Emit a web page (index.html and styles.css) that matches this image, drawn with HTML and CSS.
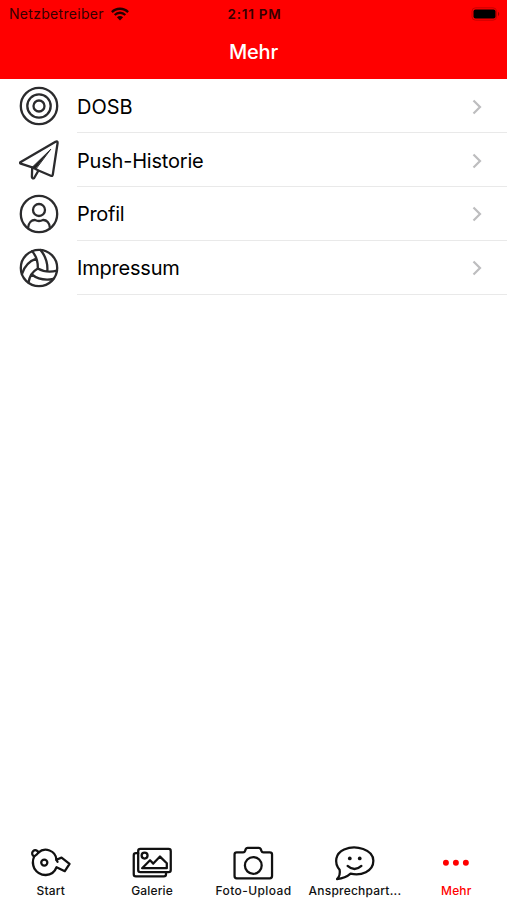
FILE: index.html
```html
<!DOCTYPE html>
<html lang="de">
<head>
<meta charset="utf-8">
<meta name="viewport" content="width=device-width, initial-scale=1">
<title>Mehr</title>
<link rel="stylesheet" href="styles.css">
</head>
<body>
<div class="app">
  <header class="header">
    <div class="status">
      <div class="carrier"><span class="carrier-name">Netzbetreiber</span>
        <svg class="wifi" viewBox="0 0 18 14" width="18" height="14" fill="none" stroke="#250000" stroke-width="2.3"><path d="M.9 5.1C5.2.6 12.800.6 17.100 5.100M3.700 8C6.700 5 11.300 5 14.300 8"/><path d="M5.900 10.200C7.700 8.500 10.300 8.500 12.100 10.200L9 13.400Z" fill="#250000" stroke="none"/></svg>
      </div>
      <span class="time">2:11 PM</span>
      <svg class="battery" viewBox="0 0 30 14" width="30" height="14"><rect x="1" y=".8" width="24.500" height="12.400" rx="3.500" fill="none" stroke="#c80000" stroke-width="1"/><rect x="2.500" y="2.500" width="22" height="9" rx="2" fill="#000"/><path d="M27 4.800Q29.500 7 27 9.200Z" fill="#a00000"/></svg>
    </div>
    <h1 class="title">Mehr</h1>
  </header>
  <main class="list">
    <a class="row">
      <svg class="icon" viewBox="0 0 40 40"><circle cx="20" cy="20" r="18.200"/><circle cx="20" cy="20" r="11.700"/><circle cx="20" cy="20" r="5.500"/></svg>
      <span class="cell"><span class="label">DOSB</span><svg class="chevron" viewBox="0 0 10 16"><path d="M1.500 1.500 8 8 1.500 14.500"/></svg></span>
    </a>
    <a class="row">
      <svg class="icon" viewBox="0 0 40 40"><path d="M1.300 22.200 36.500 1.800Q38.700.8 38.600 3L33.800 34.700Q33.500 36.500 31.800 35.700L19.500 30.500 15.300 37.800Q13.500 39.300 12.900 37L13.200 27.300 1.800 23.700Q.5 23 1.300 22.200ZM13.200 27.300 19.500 30.500"/><path d="M31.500 9.500 13.200 27.300 16.500 29Z" fill="#222" stroke-width="1"/></svg>
      <span class="cell"><span class="label push">Push-Historie</span><svg class="chevron" viewBox="0 0 10 16"><path d="M1.500 1.500 8 8 1.500 14.500"/></svg></span>
    </a>
    <a class="row">
      <svg class="icon" viewBox="0 0 40 40"><circle cx="20" cy="20" r="18.200"/><circle cx="20" cy="16" r="6"/><path d="M9 34.200C9.500 28 13 25.800 16 26Q20 28 24 26C27.500 25.800 30.800 29 31 34.200"/></svg>
      <span class="cell"><span class="label profil">Profil</span><svg class="chevron" viewBox="0 0 10 16"><path d="M1.500 1.500 8 8 1.500 14.500"/></svg></span>
    </a>
    <a class="row">
      <svg class="icon" viewBox="0 0 40 40"><circle cx="20" cy="20" r="18.200"/><path d="M13 3.300C17.500 8 19 14 18.800 20.500C24.500 23.800 31 24.300 38 22.700M18.800 20.500C13.500 23.500 10.500 28 9.500 34.500M21.500 2C26.500 8 29 15 28.300 23.500M17.300 10.700C10.500 13 5.500 18 3 26M12.800 26.500C18.500 31 26 32.500 34.300 31"/></svg>
      <span class="cell"><span class="label impressum">Impressum</span><svg class="chevron" viewBox="0 0 10 16"><path d="M1.500 1.500 8 8 1.500 14.500"/></svg></span>
    </a>
  </main>
  <nav class="tabs">
    <a class="tab">
      <svg class="tab-icon" viewBox="0 0 42 38"><path d="M8.200 5.700C14.500-.2 26 3.500 26.500 13L31.700 10.800 39.800 17 35 24.500 26.600 20.500C22.500 31 9.500 30.500 4.200 22Q1.200 15.500 4 9.500"/><path d="M26.500 13 27.600 15"/><circle cx="14.200" cy="15.800" r="3.100"/><path d="M4 9.500A3.200 3.200 0 1 1 8.200 5.700Q7 7.500 4 9.500"/></svg>
      <span class="tab-label">Start</span>
    </a>
    <a class="tab">
      <svg class="tab-icon" viewBox="0 0 42 38"><rect x="7" y="2" width="33" height="23.500" rx="2.200"/><path d="M7 6.300H4.700Q2.500 6.300 2.500 8.500V27.500Q2.500 29.700 4.700 29.700H33Q35.200 29.700 35.200 27.500V25.500"/><circle cx="13.500" cy="8.700" r="3"/><path d="M11 21.500 19 13.500 22.300 16.800 29.100 9.700 36 16.500V21.500Z"/></svg>
      <span class="tab-label">Galerie</span>
    </a>
    <a class="tab">
      <svg class="tab-icon" viewBox="0 0 42 38"><path d="M4.500 5.500H11Q12.500 5.500 13 4L13.700 2Q14.200.9 15.500.9H27Q28.300.9 28.800 2L29.500 4Q30 5.500 31.500 5.500H38Q40.300 5.500 40.300 7.700V29.500Q40.300 31.800 38 31.800H4.500Q2.300 31.800 2.300 29.500V7.700Q2.300 5.500 4.500 5.500Z"/><circle cx="21.300" cy="18.700" r="8.500"/></svg>
      <span class="tab-label foto">Foto-Upload</span>
    </a>
    <a class="tab">
      <svg class="tab-icon" viewBox="0 0 42 38"><path d="M5.400 23C-.5 16 1 6.500 10 2.500C22-2.500 39.600 2.500 39.600 14C39.600 25 27 29.500 16.500 27C12 31 7.500 32 2.800 32.500Q6.500 28.500 5.400 23Z"/><path d="M13.500 19.200Q20.500 25.500 27.500 19.200"/><g fill="#111" stroke="none"><circle cx="15.700" cy="11.600" r="1.900"/><circle cx="25.800" cy="11.600" r="1.900"/></g></svg>
      <span class="tab-label ansprech">Ansprechpart...</span>
    </a>
    <a class="tab active">
      <svg class="tab-icon" viewBox="0 0 42 38"><g fill="#f00" stroke="none"><circle cx="10.800" cy="16" r="3"/><circle cx="20.900" cy="16" r="3"/><circle cx="31" cy="16" r="3"/></g></svg>
      <span class="tab-label">Mehr</span>
    </a>
  </nav>
</div>
</body>
</html>
```
FILE: styles.css
```css
* { box-sizing: border-box; }
body { margin: 0; background: #fff; font-family: Inter, "Liberation Sans", sans-serif; color: #111; }
.app { display: flex; flex-direction: column; height: 900px; }
.header { height: 79px; background: #f00; flex: none; }
.status { display: grid; grid-template-columns: 1fr auto 1fr; align-items: center; height: 27px; padding: 0 7px 0 9px; color: #350000; font-size: 14px; }
.carrier { display: flex; align-items: center; gap: 7px; }
.carrier-name { letter-spacing: .3px; }
.wifi { display: block; }
.time { font-weight: 600; font-size: 13.500px; letter-spacing: .75px; }
.battery { justify-self: end; margin-right: -1px; }
.title { margin: 0; height: 51px; line-height: 51px; text-align: center; color: #fff; font-size: 20px; font-weight: 500; letter-spacing: -.15px; }
.list { flex: 1; padding-top: .4px; }
.row { display: flex; align-items: center; height: 53.800px; padding-left: 19px; }
.icon { width: 40px; height: 40px; flex: none; fill: none; stroke: #2b2b2d; stroke-width: 2.300; stroke-linejoin: round; stroke-linecap: round; }
.cell { flex: 1; height: 100%; margin-left: 18px; padding: 2px 25px 0 0; display: flex; align-items: center; justify-content: space-between; border-bottom: 1.500px solid #e9e9e9; }
.label { font-size: 20px; line-height: 26px; color: #000; }
.push { letter-spacing: -.2px; }
.profil { letter-spacing: -.3px; }
.impressum { letter-spacing: -.2px; }
.chevron { width: 10px; height: 16px; fill: none; stroke: #bdbdbf; stroke-width: 2.200; }
.tabs { display: grid; grid-template-columns: repeat(5, 1fr); height: 53.500px; flex: none; }
.tab { display: flex; flex-direction: column; align-items: center; min-width: 0; }
.tab-icon { width: 42px; height: 37.500px; fill: none; stroke: #111; stroke-width: 2.300; stroke-linejoin: round; stroke-linecap: round; overflow: visible; }
.tab-label { font-size: 12px; line-height: 14px; font-weight: 500; white-space: nowrap; letter-spacing: .15px; }
.foto { letter-spacing: .4px; }
.ansprech { letter-spacing: .22px; }
.active { color: #f00; }
```
